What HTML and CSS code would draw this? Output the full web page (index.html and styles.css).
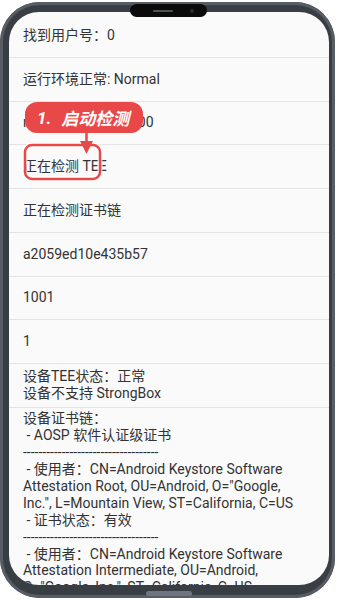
FILE: index.html
```html
<!DOCTYPE html>
<html>
<head>
    <meta charset="UTF-8">
    <title>密钥认证检测</title>
    <!-- 外部样式 -->
    <link rel="stylesheet" href="styles.css">
</head>
<body>
<div class="phone">
    <!-- 刘海 -->
    <div class="notch"><span class="speaker"></span><span class="camera"></span></div>

    <div class="screen">
        <div class="row">找到用户号：0</div>
        <div class="row">运行环境正常: Normal</div>
        <div class="row">rom 签名校验: 10000</div>
        <div class="row">正在检测 TEE</div>
        <div class="row">正在检测证书链</div>
        <div class="row">a2059ed10e435b57</div>
        <div class="row">1001</div>
        <div class="row">1</div>
        <div class="row rowMulti">设备TEE状态：正常<br>设备不支持 StrongBox</div>
        <div class="row rowLong">设备证书链：
 - AOSP 软件认证级证书
-----------------------------------
 - 使用者：CN=Android Keystore Software Attestation Root, OU=Android, O="Google, Inc.", L=Mountain View, ST=California, C=US
 - 证书状态：有效
-----------------------------------
 - 使用者：CN=Android Keystore Software Attestation Intermediate, OU=Android, O="Google, Inc.", ST=California, C=US
 - 证书状态：有效</div>
    </div>

    <!-- 标注：箭头和框 -->
    <svg class="tipMark" width="338" height="200" viewBox="0 0 338 200">
        <rect x="25" y="145" width="75" height="34" rx="7" fill="none" stroke="#ffffff" stroke-width="5" opacity="0.7"/>
        <rect x="25" y="145" width="75" height="34" rx="7" fill="none" stroke="#e94848" stroke-width="2.5"/>
        <line x1="86.5" y1="131" x2="86.5" y2="144" stroke="#e94848" stroke-width="2.5"/>
        <polygon points="80,141 93,141 86.5,154" fill="#e94848"/>
    </svg>
    <div class="tipLabel"><span class="tipNum">1.</span>启动检测</div>

    <div class="homeBar"></div>
</div>
</body>
</html>
```

FILE: styles.css
```css
/*页面*/
body {
    margin: 0;
    background: #ffffff;
    font-family: "Roboto", "Noto Sans CJK SC", sans-serif;
}

/*手机外框*/
.phone {
    position: relative;
    width: 335px;
    height: 596px;
    margin-top: 2px;
    padding: 10px 6px 13px 9px;
    box-sizing: border-box;
    background: #393d44;
    border-radius: 40px;
    box-shadow: inset 0 0 0 3px #585d65;
}

.notch {
    position: absolute;
    left: 130px;
    top: 2px;
    width: 77px;
    height: 13px;
    background: #0b0b0c;
    border-radius: 7px;
}
.speaker {
    position: absolute;
    left: 23px;
    top: 6px;
    width: 20px;
    height: 2px;
    border-radius: 1px;
    background: #4e5258;
}
.camera {
    position: absolute;
    left: 60px;
    top: 5px;
    width: 4px;
    height: 4px;
    border-radius: 2px;
    background: #2c2f34;
}

.homeBar {
    position: absolute;
    left: 146px;
    bottom: 2px;
    width: 46px;
    height: 5px;
    border-radius: 3px;
    background: #6e7580;
}

/*屏幕*/
.screen {
    height: 100%;
    padding-top: 2px;
    box-sizing: border-box;
    background: #fafafa;
    border-radius: 30px;
    overflow: hidden;
}

.row {
    display: flex;
    align-items: center;
    height: 43.75px;
    padding: 0 14px;
    box-sizing: border-box;
    border-bottom: 1px solid #e4e4e4;
    font-size: 14px;
    line-height: 17px;
    color: #333333;
}
.rowLong {
    display: block;
    height: auto;
    padding: 2.5px 22px 0 14px;
    line-height: 16.9px;
    white-space: pre-wrap;
    border-bottom: none;
}

/*标注*/
.tipMark {
    position: absolute;
    left: 0;
    top: -2px;
    pointer-events: none;
}
.tipLabel {
    position: absolute;
    left: 25px;
    top: 100px;
    height: 31px;
    padding: 0 14px 0 12px;
    display: flex;
    align-items: center;
    background: #e94848;
    border-radius: 12px;
    color: #ffffff;
    font-size: 17px;
    font-weight: bold;
    font-style: italic;
}
.tipNum {
    margin-right: 10px;
}
```
